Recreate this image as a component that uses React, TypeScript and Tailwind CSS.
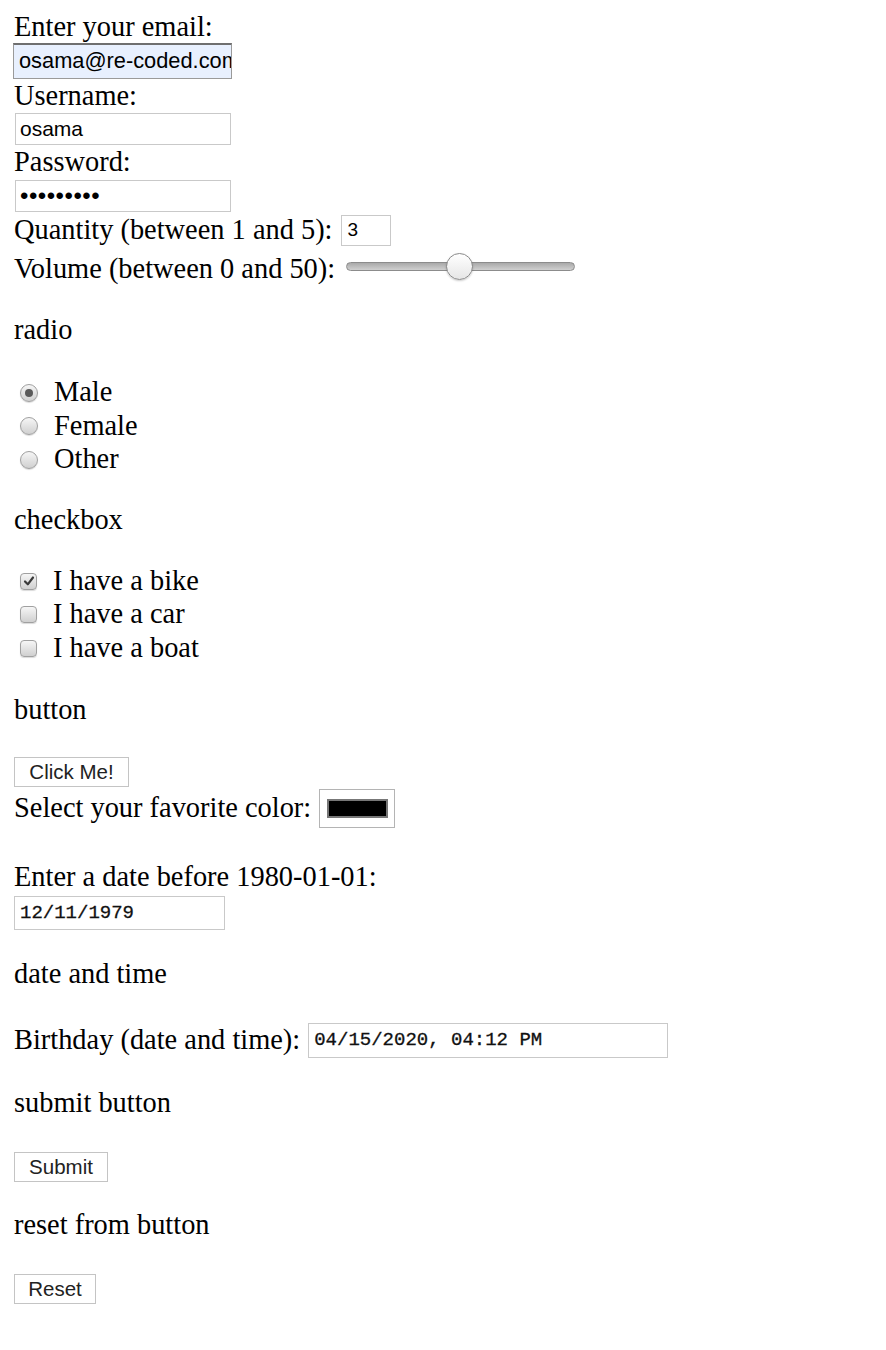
// Form controls demo page

const serif = "font-['Liberation_Serif','Times_New_Roman',serif] text-[28.4px] text-black";
const sans = "font-['Liberation_Sans',Arial,sans-serif]";
const mono = "font-['Liberation_Mono','Courier_New',monospace]";

function Line({ children, className = '' }: { children: React.ReactNode; className?: string }) {
  return <div className={`h-[33px] flex items-center leading-none ${className}`}>{children}</div>;
}

function TextBox({ value, className = '' }: { value: string; className?: string }) {
  return (
    <div
      className={`h-[32px] w-[216px] ml-[1px] border border-[#c9c9c9] bg-white flex items-center px-[4px] overflow-hidden whitespace-nowrap text-black ${sans} ${className}`}
    >
      {value}
    </div>
  );
}

function Radio({ checked = false }: { checked?: boolean }) {
  return (
    <span className="w-[18px] h-[18px] rounded-full border border-[#a0a0a0] bg-gradient-to-b from-[#f6f6f6] to-[#d0d0d0] flex items-center justify-center shadow-[0_1px_1px_rgba(0,0,0,0.15)]">
      {checked && <span className="w-[8px] h-[8px] rounded-full bg-[#5a5a5a]" />}
    </span>
  );
}

function Check({ checked = false }: { checked?: boolean }) {
  return (
    <span className="w-[17px] h-[17px] rounded-[4px] border border-[#a0a0a0] bg-gradient-to-b from-[#f6f6f6] to-[#d0d0d0] flex items-center justify-center shadow-[0_1px_1px_rgba(0,0,0,0.15)]">
      {checked && (
        <svg width="12" height="12" viewBox="0 0 12 12">
          <path d="M2 6.5 L4.8 9.3 L10 2.5" fill="none" stroke="#3a3a3a" strokeWidth="2.2" strokeLinecap="round" strokeLinejoin="round" />
        </svg>
      )}
    </span>
  );
}

function Btn({ label, w }: { label: string; w: string }) {
  return (
    <div
      className={`h-[30px] ${w} border border-[#c4c4c4] bg-white flex items-center justify-center text-[20.5px] text-[#222] ${sans}`}
    >
      {label}
    </div>
  );
}

export default function App() {
  return (
    <div className={`w-[886px] h-[1350px] bg-white pl-[14px] pt-[11px] ${serif}`}>
      <Line>Enter your email:</Line>
      <div
        className={`-ml-[1px] -mt-[1px] h-[36px] w-[219px] border border-[#9a9a9a] border-t-2 border-t-[#6f6f6f] bg-[#e8f0fe] flex items-center pl-[5px] overflow-hidden whitespace-nowrap text-[21.8px] text-black ${sans}`}
      >
        osama@re-coded.com
      </div>
      <Line className="mt-[1px]">Username:</Line>
      <TextBox value="osama" className="text-[21px]" />
      <Line className="mt-[1px]">Password:</Line>
      <TextBox value="•••••••••" className="mt-[1px] text-[24px] tracking-[0.5px]" />

      <div className="h-[34px] mt-[1px] flex items-center">
        <span>Quantity (between 1 and 5):</span>
        <span
          className={`ml-[8px] h-[31px] w-[50px] border border-[#c9c9c9] flex items-center pl-[6px] text-[19px] ${sans}`}
        >
          3
        </span>
      </div>

      <div className="h-[36px] mt-[4px] flex items-center">
        <span>Volume (between 0 and 50):</span>
        <span className="ml-[11px] relative w-[229px] h-[30px] flex items-center -mt-[6px]">
          <span className="w-full h-[9px] rounded-full border border-[#8c8c8c] bg-gradient-to-b from-[#a9a9a9] to-[#d0d0d0]" />
          <span className="absolute left-[100px] top-[2px] w-[27px] h-[27px] rounded-full border border-[#8a8a8a] bg-gradient-to-b from-white to-[#e6e6e6] shadow-[0_1px_2px_rgba(0,0,0,0.2)]" />
        </span>
      </div>

      <Line className="mt-[27px]">radio</Line>

      <div className="mt-[29px] flex flex-col">
        {[
          ['Male', true],
          ['Female', false],
          ['Other', false],
        ].map(([label, on]) => (
          <div key={label as string} className="h-[33.5px] flex items-center">
            <span className="ml-[6px] mr-[16px]">
              <Radio checked={on as boolean} />
            </span>
            {label}
          </div>
        ))}
      </div>

      <Line className="mt-[27px]">checkbox</Line>

      <div className="mt-[28px] flex flex-col">
        {[
          ['I have a bike', true],
          ['I have a car', false],
          ['I have a boat', false],
        ].map(([label, on]) => (
          <div key={label as string} className="h-[33.5px] flex items-center">
            <span className="ml-[6px] mr-[16px]">
              <Check checked={on as boolean} />
            </span>
            {label}
          </div>
        ))}
      </div>

      <Line className="mt-[29px]">button</Line>

      <div className="mt-[30px]">
        <Btn label="Click Me!" w="w-[115px]" />
      </div>

      <div className="h-[39px] mt-[2px] flex items-center">
        <span>Select your favorite color:</span>
        <span className="ml-[8px] w-[76px] h-[39px] border border-[#b4b4b4] flex items-center justify-center">
          <span className="w-[61px] h-[19px] border-2 border-[#777] bg-black" />
        </span>
      </div>

      <Line className="mt-[33px]">Enter a date before 1980-01-01:</Line>
      <div
        className={`mt-[2px] h-[34px] w-[211px] border border-[#c9c9c9] flex items-center pl-[5px] text-[19px] text-[#111] [-webkit-text-stroke:0.3px_#111] ${mono}`}
      >
        12/11/1979
      </div>

      <Line className="mt-[28px]">date and time</Line>

      <div className="h-[36px] mt-[31px] flex items-center">
        <span>Birthday (date and time):</span>
        <span
          className={`ml-[8px] h-[35px] w-[360px] border border-[#c9c9c9] flex items-center pl-[5px] text-[19px] text-[#111] [-webkit-text-stroke:0.3px_#111] ${mono}`}
        >
          04/15/2020, 04:12 PM
        </span>
      </div>

      <Line className="mt-[29px]">submit button</Line>
      <div className="mt-[32px]">
        <Btn label="Submit" w="w-[94px]" />
      </div>

      <Line className="mt-[27px]">reset from button</Line>
      <div className="mt-[32px]">
        <Btn label="Reset" w="w-[82px]" />
      </div>
    </div>
  );
}
